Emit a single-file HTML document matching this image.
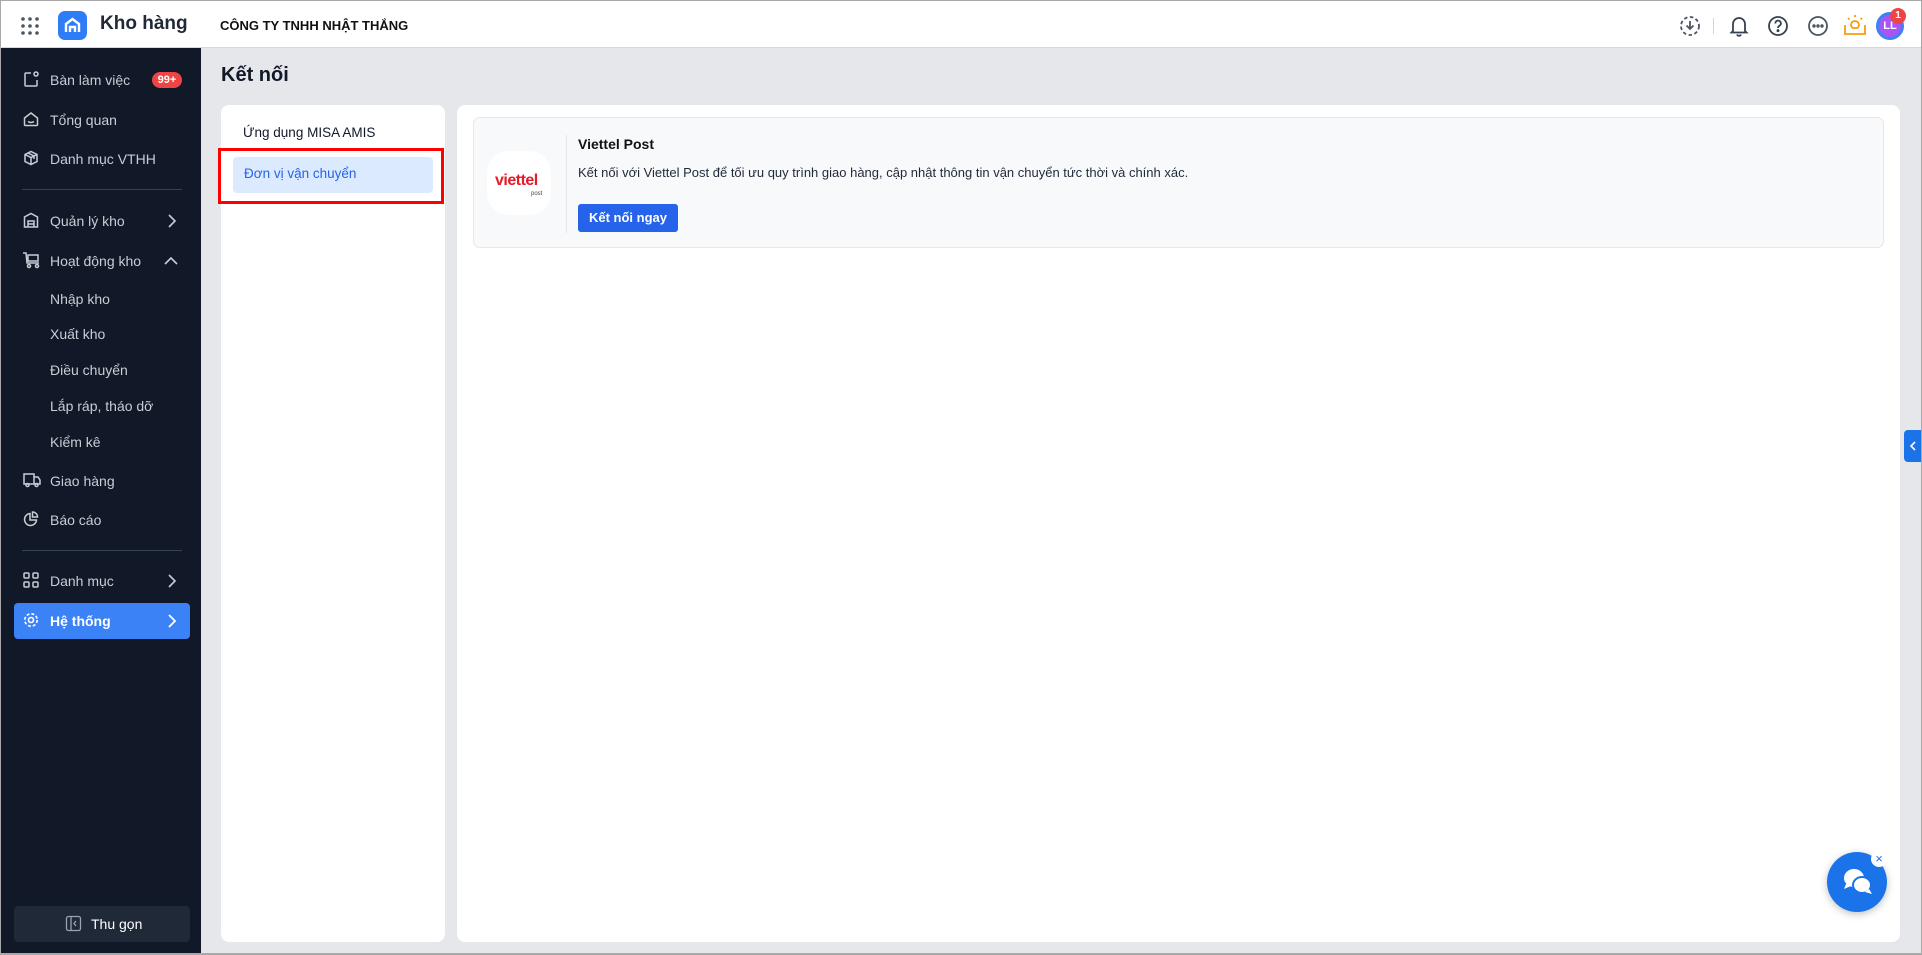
<!DOCTYPE html>
<html><head><meta charset="utf-8"><style>
*{box-sizing:border-box;margin:0;padding:0}
body{width:1922px;height:955px;overflow:hidden;font-family:"Liberation Sans","Noto Sans CJK SC",sans-serif;background:#e5e7eb;position:relative;}
.top{position:absolute;left:0;top:0;width:1922px;height:48px;background:#fff;border:1px solid #a8a8a8;border-bottom:1px solid #d6d8dc}
.side{position:absolute;left:0;top:48px;width:201px;height:907px;background:#111827;border-left:1px solid #a8a8a8}
.it{position:absolute;left:0;width:201px;height:20px;color:#c8cdd5;font-size:14px;line-height:20px}
.it span{position:absolute;left:49px}
.it svg{position:absolute;left:22px;top:1px}
.it .chev{position:absolute;left:165px;top:3px}
.div{position:absolute;left:21px;width:160px;height:1px;background:#374151}
.panel{position:absolute;background:#fff;border-radius:8px}
svg{overflow:visible}
</style></head><body>
<div class="top">
 <svg style="position:absolute;left:20px;top:16px" width="18" height="18" fill="#4b5563"><circle cx="2" cy="2" r="1.8"/><circle cx="9" cy="2" r="1.8"/><circle cx="16" cy="2" r="1.8"/><circle cx="2" cy="9" r="1.8"/><circle cx="9" cy="9" r="1.8"/><circle cx="16" cy="9" r="1.8"/><circle cx="2" cy="16" r="1.8"/><circle cx="9" cy="16" r="1.8"/><circle cx="16" cy="16" r="1.8"/></svg>
 <div style="position:absolute;left:57px;top:10px;width:29px;height:29px;border-radius:7px;background:#2f7df6"></div>
 <svg style="position:absolute;left:63px;top:16px" width="17" height="17" fill="none" stroke="#fff" stroke-width="2.4"><path d="M2 15V7L8.5 2L15 7V15M6 15V10h5v5"/></svg>
 <div style="position:absolute;left:99px;top:12px;font-size:19px;font-weight:bold;color:#1f2937">Kho hàng</div>
 <div style="position:absolute;left:219px;top:17px;font-size:13px;font-weight:bold;color:#111">CÔNG TY TNHH NHẬT THẮNG</div>
 <svg style="position:absolute;left:1679px;top:15px" width="20" height="20" fill="none" stroke="#4b5563" stroke-width="1.8"><circle cx="10" cy="10" r="9" stroke-dasharray="3.5 2.5"/><path d="M10 5v8M6.5 9.5L10 13l3.5-3.5"/></svg>
 <div style="position:absolute;left:1712px;top:17px;width:1px;height:16px;background:#d1d5db"></div>
 <svg style="position:absolute;left:1728px;top:14px" width="20" height="22" fill="none" stroke="#374151" stroke-width="1.8"><path d="M4 16V9a6 6 0 0112 0v7l1.5 1.5h-15z M8 19.5a2.2 2.2 0 004 0"/></svg>
 <svg style="position:absolute;left:1767px;top:15px" width="20" height="20" fill="none" stroke="#374151" stroke-width="1.8"><circle cx="10" cy="10" r="9"/><path d="M7.3 7.5a2.8 2.8 0 115 1.6c-1 .8-2.3 1.3-2.3 2.9"/><circle cx="10" cy="14.6" r=".6" fill="#374151"/></svg>
 <svg style="position:absolute;left:1807px;top:15px" width="20" height="20" fill="none" stroke="#4b5563" stroke-width="1.8"><circle cx="10" cy="10" r="9"/><circle cx="6" cy="10" r=".8" fill="#4b5563"/><circle cx="10" cy="10" r=".8" fill="#4b5563"/><circle cx="14" cy="10" r=".8" fill="#4b5563"/></svg>
 <svg style="position:absolute;left:1843px;top:12px" width="22" height="24" fill="none" stroke="#f59e0b" stroke-width="1.8"><path d="M1 12v9h20v-9M7 12a4 4 0 118 0c0 1.5-1 2-1.5 3h-5C8 14 7 13.5 7 12z M11 2v2M4 5l1.4 1.4M18 5l-1.4 1.4"/></svg>
 <div style="position:absolute;left:1875px;top:11px;width:28px;height:28px;border-radius:50%;background:#a855f7;border:3px solid #3b82f6;color:#fff;font-size:11px;font-weight:bold;text-align:center;line-height:22px">LL</div>
 <div style="position:absolute;left:1889px;top:7px;width:16px;height:16px;border-radius:50%;background:#ef4444;color:#fff;font-size:10px;font-weight:bold;text-align:center;line-height:16px">1</div>
</div>
<div class="side">
 <div class="it" style="top:22px"><svg width="16" height="16" fill="none" stroke="#c8cdd5" stroke-width="1.5"><path d="M8 2H3a1 1 0 00-1 1v11a1 1 0 001 1h10a1 1 0 001-1V9"/><circle cx="13" cy="3" r="2"/></svg><span>Bàn làm việc</span><div style="position:absolute;left:151px;top:2px;width:30px;height:16px;border-radius:8px;background:#ef4444;color:#fff;font-size:11px;font-weight:bold;text-align:center;line-height:16px">99+</div></div>
 <div class="it" style="top:62px"><svg width="16" height="16" fill="none" stroke="#c8cdd5" stroke-width="1.5"><path d="M1.5 7L8 2l6.5 5v6.5a1 1 0 01-1 1h-11a1 1 0 01-1-1z M5 10.5q3 2 6 0"/></svg><span>Tổng quan</span></div>
 <div class="it" style="top:101px"><svg width="16" height="16" fill="none" stroke="#c8cdd5" stroke-width="1.5"><path d="M8 1.5l6 3v7l-6 3-6-3v-7z M2 4.5l6 3 6-3M8 7.5v7M5 3l6 3v3"/></svg><span>Danh mục VTHH</span></div>
 <div class="div" style="top:141px"></div>
 <div class="it" style="top:163px"><svg width="16" height="16" fill="none" stroke="#c8cdd5" stroke-width="1.5"><path d="M1.5 15V5L8 1.5 14.5 5v10zM5 15V9h6v6M5 12h6"/></svg><span>Quản lý kho</span><svg class="chev" width="10" height="14" fill="none" stroke="#c8cdd5" stroke-width="1.6"><path d="M3 1l6 6-6 6"/></svg></div>
 <div class="it" style="top:203px"><svg width="18" height="16" fill="none" stroke="#c8cdd5" stroke-width="1.5"><path d="M0 1h3l1 10h12M5 3h10v6H5z"/><circle cx="6" cy="14" r="1.5"/><circle cx="14" cy="14" r="1.5"/></svg><span>Hoạt động kho</span><svg class="chev" width="14" height="10" style="left:163px;top:5px" fill="none" stroke="#c8cdd5" stroke-width="1.6"><path d="M1 8l6-6 6 6"/></svg></div>
 <div class="it" style="top:241px"><span>Nhập kho</span></div>
 <div class="it" style="top:276px"><span>Xuất kho</span></div>
 <div class="it" style="top:312px"><span>Điều chuyển</span></div>
 <div class="it" style="top:348px"><span>Lắp ráp, tháo dỡ</span></div>
 <div class="it" style="top:384px"><span>Kiểm kê</span></div>
 <div class="it" style="top:423px"><svg width="18" height="16" fill="none" stroke="#c8cdd5" stroke-width="1.5"><path d="M1 2h10v10H1zM11 5h4l2 3v4h-6"/><circle cx="4.5" cy="13" r="1.5"/><circle cx="13.5" cy="13" r="1.5"/></svg><span>Giao hàng</span></div>
 <div class="it" style="top:462px"><svg width="16" height="16" fill="none" stroke="#c8cdd5" stroke-width="1.5"><path d="M7 2.5A6 6 0 1013.5 9H7z M9.5 1v5h5a5 5 0 00-5-5z"/></svg><span>Báo cáo</span></div>
 <div class="div" style="top:502px"></div>
 <div class="it" style="top:523px"><svg width="16" height="16" fill="none" stroke="#c8cdd5" stroke-width="1.5"><rect x="1" y="1" width="5" height="5" rx="1"/><rect x="10" y="1" width="5" height="5" rx="1"/><rect x="1" y="10" width="5" height="5" rx="1"/><rect x="10" y="10" width="5" height="5" rx="1"/></svg><span>Danh mục</span><svg class="chev" width="10" height="14" fill="none" stroke="#c8cdd5" stroke-width="1.6"><path d="M3 1l6 6-6 6"/></svg></div>
 <div style="position:absolute;left:13px;top:555px;width:176px;height:36px;border-radius:4px;background:#3b82f6"></div>
 <div class="it" style="top:563px;color:#fff;font-weight:bold"><svg width="16" height="16" fill="none" stroke="#fff" stroke-width="1.6"><circle cx="8" cy="8" r="2.5"/><circle cx="8" cy="8" r="6.2" stroke-dasharray="3 1.9"/></svg><span>Hệ thống</span><svg class="chev" width="10" height="14" fill="none" stroke="#fff" stroke-width="1.8"><path d="M3 1l6 6-6 6"/></svg></div>
 <div style="position:absolute;left:13px;top:858px;width:176px;height:36px;border-radius:4px;background:#1f2937"></div>
 <svg style="position:absolute;left:65px;top:868px" width="15" height="15" fill="none" stroke="#9ca3af" stroke-width="1.3"><rect x=".5" y=".5" width="14" height="14" rx="2"/><path d="M5 1v13M10 5l-2 2.5 2 2.5"/></svg>
 <div style="position:absolute;left:90px;top:866px;color:#fff;font-size:14px;line-height:20px">Thu gọn</div>
</div>
<div style="position:absolute;left:221px;top:64px;font-size:20px;font-weight:bold;color:#111827">Kết nối</div>
<div class="panel" style="left:221px;top:105px;width:224px;height:837px">
 <div style="position:absolute;left:22px;top:20px;font-size:13.5px;color:#111827">Ứng dụng MISA AMIS</div>
 <div style="position:absolute;left:12px;top:52px;width:200px;height:36px;border-radius:4px;background:#dbeafe"></div>
 <div style="position:absolute;left:23px;top:61px;font-size:13.5px;color:#2563eb">Đơn vị vận chuyển</div>
 <div style="position:absolute;left:-3px;top:43px;width:226px;height:56px;border:3px solid #ff0000"></div>
</div>
<div class="panel" style="left:457px;top:105px;width:1443px;height:837px">
 <div style="position:absolute;left:16px;top:12px;width:1411px;height:131px;border:1px solid #e5e7eb;border-radius:7px;background:#f8f9fb">
  <div style="position:absolute;left:13px;top:33px;width:64px;height:64px;border-radius:22px;background:#fff"></div>
  <div style="position:absolute;left:21px;top:54px;font-size:16px;color:#e11d2a;letter-spacing:-.5px;font-weight:bold">viettel</div>
  <div style="position:absolute;left:57px;top:73px;font-size:6px;color:#444">post</div>
  <div style="position:absolute;left:92px;top:17px;width:1px;height:98px;background:#e5e7eb"></div>
  <div style="position:absolute;left:104px;top:18px;font-size:14px;font-weight:bold;color:#111">Viettel Post</div>
  <div style="position:absolute;left:104px;top:47px;font-size:13px;color:#1f2937">Kết nối với Viettel Post để tối ưu quy trình giao hàng, cập nhật thông tin vận chuyển tức thời và chính xác.</div>
  <div style="position:absolute;left:104px;top:86px;width:100px;height:28px;border-radius:3px;background:#2563eb;color:#fff;font-size:13px;font-weight:bold;text-align:center;line-height:28px">Kết nối ngay</div>
 </div>
</div>
<div style="position:absolute;left:1904px;top:430px;width:18px;height:32px;background:#1a73e8;border-radius:4px 0 0 4px"></div>
<svg style="position:absolute;left:1909px;top:441px" width="8" height="10" fill="none" stroke="#fff" stroke-width="1.6"><path d="M6 1L2 5l4 4"/></svg>
<div style="position:absolute;left:1827px;top:852px;width:60px;height:60px;border-radius:50%;background:#1a73e8;box-shadow:0 2px 8px rgba(0,0,0,.25)"></div>
<svg style="position:absolute;left:1842px;top:866px" width="32" height="32" fill="#fff"><ellipse cx="12" cy="12" rx="10" ry="9"/><path d="M4 18l-2 5 7-3z"/><ellipse cx="20" cy="19" rx="9" ry="8" stroke="#1a73e8" stroke-width="2"/><path d="M27 23l3 5-7-2z"/></svg>
<div style="position:absolute;left:1871px;top:851px;width:16px;height:16px;border-radius:50%;background:#fff;color:#1a73e8;font-size:13px;text-align:center;line-height:16px">×</div>
<div style="position:absolute;left:0;top:953px;width:1922px;height:2px;background:#a8a8a8"></div>
<div style="position:absolute;left:1921px;top:0;width:1px;height:955px;background:#a8a8a8"></div>
</body></html>
